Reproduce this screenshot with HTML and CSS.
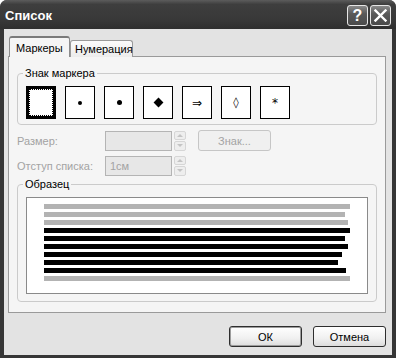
FILE: index.html
```html
<!DOCTYPE html>
<html lang="ru">

<head>
    <meta charset="UTF-8">
    <meta name="viewport" content="width=device-width, initial-scale=1.0">
    <title>Список</title>
    <link rel="stylesheet" href="styles.css">
</head>

<body>
    <div class="window">
        <div class="titlebar">
            <span class="title">Список</span>
            <div class="caption-btns">
                <span class="cap-btn help">?</span>
                <span class="cap-btn close">
                    <svg width="13" height="13" viewBox="0 0 13 13">
                        <path d="M1.5 1.5 L11.5 11.5 M11.5 1.5 L1.5 11.5" stroke="#fff" stroke-width="2.4" stroke-linecap="square" />
                    </svg>
                </span>
            </div>
        </div>
        <div class="client">
            <div class="tabs">
                <div class="tab active">Маркеры</div>
                <div class="tab">Нумерация</div>
            </div>
            <div class="panel">
                <fieldset class="group">
                    <legend>Знак маркера</legend>
                    <div class="markers">
                        <div class="marker selected"></div>
                        <div class="marker"><span class="dot small"></span></div>
                        <div class="marker"><span class="dot"></span></div>
                        <div class="marker"><span class="diamond"></span></div>
                        <div class="marker"><span class="glyph">&rArr;</span></div>
                        <div class="marker"><span class="glyph thin">&loz;</span></div>
                        <div class="marker"><span class="glyph">*</span></div>
                    </div>
                </fieldset>

                <div class="field-row">
                    <label>Размер:</label>
                    <div class="input"></div>
                    <div class="spin"><span class="up"></span><span class="down"></span></div>
                    <button class="btn sym-btn" disabled>Знак...</button>
                </div>
                <div class="field-row second">
                    <label>Отступ списка:</label>
                    <div class="input">1см</div>
                    <div class="spin"><span class="up"></span><span class="down"></span></div>
                </div>

                <fieldset class="group sample">
                    <legend>Образец</legend>
                    <div class="preview">
                        <div class="line gray" style="width: 306px"></div>
                        <div class="line gray" style="width: 301px"></div>
                        <div class="line gray" style="width: 304px"></div>
                        <div class="line" style="width: 306px"></div>
                        <div class="line" style="width: 301px"></div>
                        <div class="line" style="width: 304px"></div>
                        <div class="line" style="width: 298px"></div>
                        <div class="line" style="width: 294px"></div>
                        <div class="line" style="width: 302px"></div>
                        <div class="line gray" style="width: 306px"></div>
                    </div>
                </fieldset>
            </div>
            <div class="footer">
                <button class="btn default">ОК</button>
                <button class="btn">Отмена</button>
            </div>
        </div>
    </div>
</body>

</html>
```

FILE: styles.css
```css
* {
    padding: 0;
    margin: 0;
    box-sizing: border-box;
}

body {
    background-color: #fff;
    font-family: "Liberation Sans", Arial, sans-serif;
    font-size: 11px;
    color: #000;
}

.window {
    width: 396px;
    height: 358px;
    background-color: #363636;
    border-radius: 7px 7px 0 0;
    display: flex;
    flex-direction: column;
    overflow: hidden;
}

.titlebar {
    height: 29px;
    display: flex;
    align-items: center;
    justify-content: space-between;
    padding: 0 5px 0 5px;
    background: linear-gradient(#5c5c5c, #3e3e3e 15%, #383838 70%, #2f2f2f);
}

.title {
    color: #fff;
    font-weight: bold;
    font-size: 13px;
    margin-top: 1px;
}

.caption-btns {
    display: flex;
    gap: 2px;
    margin-top: 2px;
}

.cap-btn {
    width: 21px;
    height: 21px;
    border: 1px solid #e6e6e6;
    border-radius: 3px;
    background: linear-gradient(#8a8a8a, #5a5a5a 40%, #4a4a4a);
    color: #fff;
    display: flex;
    align-items: center;
    justify-content: center;
    font-weight: bold;
    font-size: 16px;
}

.client {
    flex: 1;
    margin: 0 4px 3px 4px;
    background-color: #e3e3e3;
    padding: 7px 6px 0 4px;
}

.tabs {
    display: flex;
    align-items: flex-end;
    height: 21px;
    margin-left: 1px;
    margin-bottom: -1px;
    position: relative;
}

.tab {
    height: 17px;
    width: 63px;
    padding: 2px 0 0 4px;
    border: 1px solid #9a9a9a;
    border-bottom: none;
    border-radius: 3px 3px 0 0;
    background: linear-gradient(#fbfbfb, #ececec);
}

.tab.active {
    height: 21px;
    width: 61px;
    padding: 4px 0 0 6px;
    background: #f5f5f5;
    border-color: #8c8c8c;
    border-top: 2px solid #7a7a7a;
}

.panel {
    height: 257px;
    border: 1px solid #9a9a9a;
    background-color: #f5f5f5;
    padding: 10px 8px 0 8px;
}

.group {
    border: 1px solid #cbcbcb;
    border-radius: 4px;
    padding: 6px 8px 5px 8px;
}

.group legend {
    padding: 0 2px;
    margin-left: -3px;
    line-height: 13px;
}

.markers {
    display: flex;
    gap: 9px;
}

.marker {
    width: 30px;
    height: 33px;
    border: 1px solid #000;
    background-color: #fff;
    display: flex;
    align-items: center;
    justify-content: center;
}

.marker.selected {
    border: 3px solid #000;
    outline: 1px dotted #000;
    outline-offset: -4px;
}

.dot {
    width: 5px;
    height: 5px;
    border-radius: 50%;
    background-color: #000;
}

.dot.small {
    width: 4px;
    height: 4px;
}

.diamond {
    width: 7px;
    height: 7px;
    background-color: #000;
    transform: rotate(45deg);
}

.glyph {
    font-size: 12px;
    font-family: "DejaVu Sans", sans-serif;
}

.glyph.thin {
    font-size: 11px;
}

.field-row {
    display: flex;
    align-items: center;
    margin-top: 5px;
    height: 21px;
}

.field-row.second {
    margin-top: 4px;
}

.field-row label {
    width: 88px;
    color: #a3a3a3;
}

.input {
    width: 67px;
    height: 20px;
    border: 1px solid #b4b4b4;
    background-color: #e7e7e7;
    color: #a3a3a3;
    padding: 3px 0 0 4px;
}

.spin {
    width: 12px;
    height: 20px;
    margin-left: 2px;
    display: flex;
    flex-direction: column;
    gap: 1px;
}

.spin span {
    flex: 1;
    border: 1px solid #d6d6d6;
    border-radius: 2px;
    background-color: #eeeeee;
    display: flex;
    align-items: center;
    justify-content: center;
}

.spin .up::after,
.spin .down::after {
    content: "";
    border-left: 3px solid transparent;
    border-right: 3px solid transparent;
}

.spin .up::after {
    border-bottom: 3px solid #c4c4c4;
}

.spin .down::after {
    border-top: 3px solid #c4c4c4;
}

.btn {
    width: 73px;
    height: 21px;
    border: 1px solid #2e2e2e;
    border-radius: 3px;
    background: linear-gradient(#ffffff, #f0f0f0 60%, #dcdcdc);
    font-family: "Liberation Sans", Arial, sans-serif;
    font-size: 11px;
    color: #000;
}

.btn.default {
    box-shadow: inset 0 0 0 1px #9c9c9c;
}

.sym-btn {
    margin-left: 12px;
    border-color: #c6c6c6;
    background: #f0f0f0;
    color: #a3a3a3;
}

.sample {
    margin-top: 2px;
    padding: 6px 8px 7px 8px;
}

.preview {
    height: 97px;
    border: 1px solid #8a8a8a;
    background-color: #fff;
    padding: 6px 0 0 17px;
    display: flex;
    flex-direction: column;
    gap: 3px;
}

.line {
    height: 5px;
    background-color: #000;
}

.line.gray {
    background-color: #b3b3b3;
}

.footer {
    display: flex;
    justify-content: flex-end;
    gap: 11px;
    margin-top: 13px;
}
```
